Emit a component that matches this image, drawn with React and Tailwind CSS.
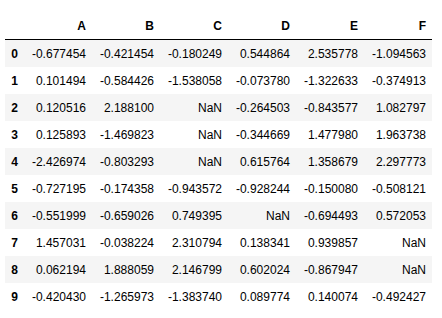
const columns = ['A', 'B', 'C', 'D', 'E', 'F'];

const rows = [
  ['-0.677454', '-0.421454', '-0.180249', '0.544864', '2.535778', '-1.094563'],
  ['0.101494', '-0.584426', '-1.538058', '-0.073780', '-1.322633', '-0.374913'],
  ['0.120516', '2.188100', 'NaN', '-0.264503', '-0.843577', '1.082797'],
  ['0.125893', '-1.469823', 'NaN', '-0.344669', '1.477980', '1.963738'],
  ['-2.426974', '-0.803293', 'NaN', '0.615764', '1.358679', '2.297773'],
  ['-0.727195', '-0.174358', '-0.943572', '-0.928244', '-0.150080', '-0.508121'],
  ['-0.551999', '-0.659026', '0.749395', 'NaN', '-0.694493', '0.572053'],
  ['1.457031', '-0.038224', '2.310794', '0.138341', '0.939857', 'NaN'],
  ['0.062194', '1.888059', '2.146799', '0.602024', '-0.867947', 'NaN'],
  ['-0.420430', '-1.265973', '-1.383740', '0.089774', '0.140074', '-0.492427'],
];

function Cell({ children, bold }) {
  return (
    <div className={`flex h-full items-center justify-end px-[6px] ${bold ? 'font-bold' : ''}`}>
      {children}
    </div>
  );
}

export default function App() {
  return (
    <div className="h-[318px] w-[442px] bg-white pl-[5px] pt-[12px] text-[12px] text-black [font-family:'Liberation_Sans',Arial,sans-serif]">
      <div className="w-[427px]">
        <div className="grid h-[28px] grid-cols-[19px_repeat(6,68px)] border-b border-black">
          <Cell bold></Cell>
          {columns.map((c) => (
            <Cell key={c} bold>{c}</Cell>
          ))}
        </div>
        {rows.map((row, i) => (
          <div
            key={i}
            className={`grid h-[27px] grid-cols-[19px_repeat(6,68px)] ${i % 2 === 0 ? 'bg-[#f5f5f5]' : 'bg-white'}`}
          >
            <Cell bold>{i}</Cell>
            {row.map((v, j) => (
              <Cell key={j}>{v}</Cell>
            ))}
          </div>
        ))}
      </div>
    </div>
  );
}
